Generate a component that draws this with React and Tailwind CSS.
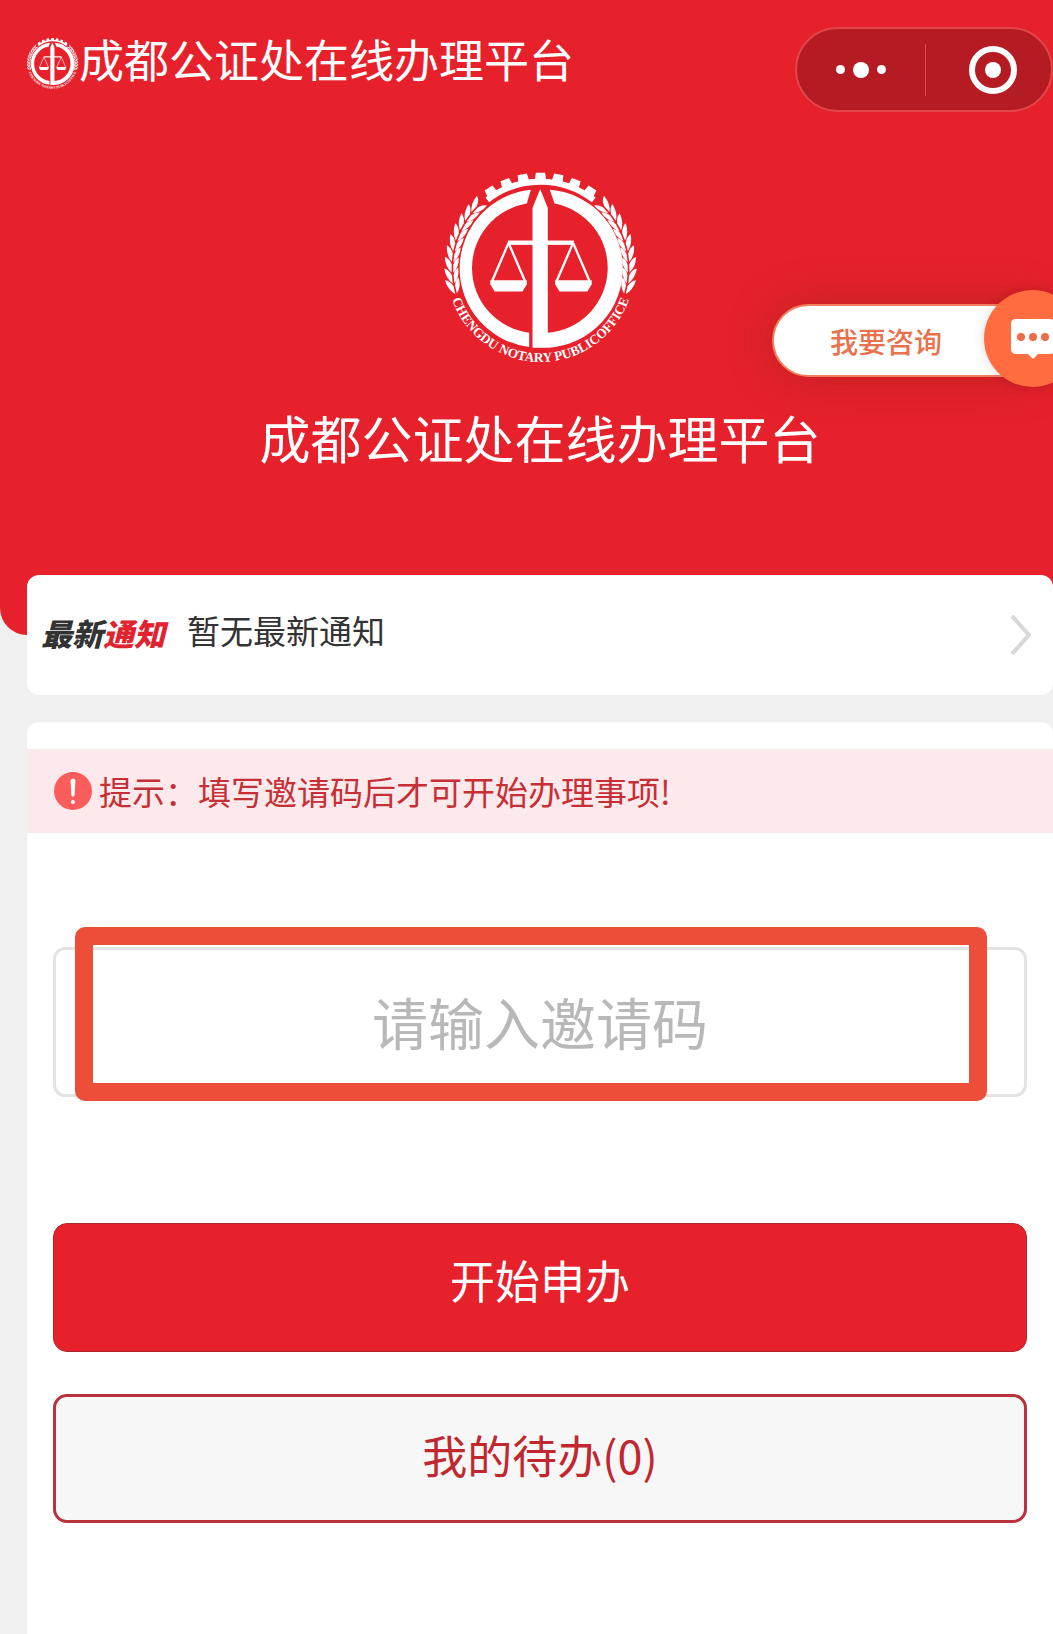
import React, { useId, useState } from "react";

const TEETH = [-33, -22, -11, 0, 11, 22, 33];
const LEAVES = [0, 1, 2, 3, 4, 5, 6, 7, 8];

const Wheat = () => (
  <g>
    {LEAVES.map((i) => (
      <g key={i} transform={`rotate(${-47 - i * 7} 334 326)`}>
        <path d="M316 59 L340 59 Q358 52 363 38 Q332 40 316 59 Z" />
        <path d="M316 64 L340 64 Q356 68 362 80 Q334 82 316 64 Z" />
      </g>
    ))}
  </g>
);

const Emblem = ({ className }) => {
  const arcId = useId();

  return (
    <svg
      viewBox="50 38 568 572"
      className={className}
      fill="#fff"
      overflow="visible"
      aria-hidden="true"
    >
      {/* Gear */}
      <path
        d="M174 121 A260 260 0 0 1 494 121"
        fill="none"
        stroke="#fff"
        strokeWidth="18"
      />
      {TEETH.map((angle) => (
        <path
          key={angle}
          d="M320 39 H348 L351 64 H317 Z"
          transform={`rotate(${angle} 334 326)`}
        />
      ))}

      {/* Wheat on both sides */}
      <Wheat />
      <g transform="translate(668 0) scale(-1 1)">
        <Wheat />
      </g>

      {/* Ring and sword */}
      <path d="M305 90 A238 238 0 0 0 300 563 L300 520 A196 196 0 0 1 293 132 Z" />
      <path d="M362 90 A238 238 0 0 1 332 565 L310 565 L310 145 L333 88 L356 145 L356 520 A196 196 0 0 0 376 132 Z" />

      {/* Scales */}
      <rect x="236" y="243" width="198" height="13" />
      <path
        d="M238 250 L189 364 M238 250 L287 364 M432 250 L383 364 M432 250 L481 364"
        fill="none"
        stroke="#fff"
        strokeWidth="7"
      />
      <path d="M183 362 H293 V374 L280 396 H196 L183 374 Z" />
      <path d="M378 362 H488 V374 L475 396 H391 L378 374 Z" />

      <path id={arcId} d="M52 326 A282 282 0 0 0 616 326" fill="none" />
      <text
        fontFamily="'Liberation Serif', serif"
        fontWeight="700"
        fontSize="40"
        textAnchor="middle"
      >
        <textPath href={`#${arcId}`} startOffset="50%">
          CHENGDU NOTARY PUBLICOFFICE
        </textPath>
      </text>
    </svg>
  );
};

const Capsule = () => (
  <div className="flex h-[85px] w-[258px] items-center rounded-full border-2 border-[#e4454b] bg-[#b51b22]">
    <button
      type="button"
      aria-label="更多"
      className="flex h-full w-[128px] items-center justify-center gap-2"
    >
      <span className="size-[9px] rounded-full bg-white" />
      <span className="size-4 rounded-full bg-white" />
      <span className="size-[9px] rounded-full bg-white" />
    </button>
    <span className="h-[52px] w-px bg-[#dc4a50]" />
    <button
      type="button"
      aria-label="关闭"
      className="flex h-full flex-1 items-center justify-center pl-2"
    >
      <span className="flex size-12 items-center justify-center rounded-full border-6 border-white">
        <span className="size-4 rounded-full bg-white" />
      </span>
    </button>
  </div>
);

const ConsultButton = () => (
  <button
    type="button"
    className="absolute top-[290px] -right-7 flex items-center"
  >
    <span className="mt-1 flex h-[73px] w-[262px] items-center rounded-l-full border-2 border-[#f0805f] bg-white pl-14 text-[28px] font-medium text-[#e8714e] shadow-[0_0_44px_rgba(120,40,20,0.35)]">
      我要咨询
    </span>
    <span className="-ml-[50px] flex size-[97px] items-center justify-center rounded-full bg-[#ff6c40] shadow-[0_0_12px_rgba(0,0,0,0.15)]">
      <svg viewBox="0 0 46 42" className="h-[42px] w-[46px]" aria-hidden="true">
        <path
          d="M6 1 H40 Q45 1 45 6 V31 Q45 36 40 36 H28 L23 41 L18 36 H6 Q1 36 1 31 V6 Q1 1 6 1 Z"
          fill="#fff"
        />
        <circle cx="11" cy="19" r="4" fill="#ef6a47" />
        <circle cx="23" cy="19" r="4" fill="#ef6a47" />
        <circle cx="35" cy="19" r="4" fill="#ef6a47" />
      </svg>
    </span>
  </button>
);

const App = () => {
  const [code, setCode] = useState("");

  return (
    <div className="relative flex min-h-screen flex-col overflow-hidden bg-[#f0f0f0] font-['Noto_Sans_CJK_SC',sans-serif]">
      <header className="rounded-b-[27px] bg-[#e6212b] pt-[27px] pb-[160px] pl-[27px] text-white">
        <div className="flex items-start justify-between">
          <div className="flex items-start">
            <Emblem className="mt-[11px] size-[51px]" />
            <span className="ml-px text-[45px] leading-[64px]">
              成都公证处在线办理平台
            </span>
          </div>
          <Capsule />
        </div>

        <Emblem className="mx-auto mt-[60px] h-[191px] w-[189px]" />
        <h1 className="mt-9 text-center text-[51px] leading-[76px]">
          成都公证处在线办理平台
        </h1>
      </header>

      <ConsultButton />

      <main className="-mt-[60px] flex flex-1 flex-col gap-[27px] pl-[27px]">
        {/* Notice */}
        <a
          href="#notice"
          className="flex h-[120px] items-center rounded-xl bg-white pr-[22px] pl-[14px]"
        >
          <span className="pb-1 text-[31px] font-black text-[#333] italic">
            最新<span className="text-[#e0232e]">通知</span>
          </span>
          <span className="ml-[22px] flex-1 pb-2 text-[33px] text-[#333]">
            暂无最新通知
          </span>
          <svg
            viewBox="0 0 20 40"
            className="h-10 w-5"
            fill="none"
            stroke="#d8d8d8"
            strokeWidth="4"
            aria-hidden="true"
          >
            <path d="M1 1 L18 20 L1 39" />
          </svg>
        </a>

        {/* Invitation code form */}
        <section className="flex-1 rounded-t-xl bg-white pt-[27px]">
          <p className="flex h-[84px] items-center gap-1.5 bg-[#fce9eb] pl-[26px] text-[33px] text-[#c62f36]">
            <svg viewBox="0 0 40 40" className="size-10" aria-hidden="true">
              <circle cx="20" cy="20" r="19" fill="#fb5c5c" />
              <path
                d="M18 9 Q20 7 22 9 L21 25 H19 Z"
                fill="#fff"
                stroke="#fff"
                strokeLinejoin="round"
              />
              <circle cx="20" cy="31" r="2" fill="#fff" />
            </svg>
            <span className="pt-0.5">提示：填写邀请码后才可开始办理事项!</span>
          </p>

          <form
            className="pt-[114px] pr-[26px] pb-[110px] pl-[26px]"
            onSubmit={(e) => e.preventDefault()}
          >
            <div className="relative">
              <input
                id="invite-code"
                type="text"
                aria-label="邀请码"
                value={code}
                onChange={(e) => setCode(e.target.value)}
                placeholder="请输入邀请码"
                className="block h-[150px] w-full rounded-xl border-3 border-[#e3e3e3] bg-white pb-1 text-center text-[56px] text-[#333] placeholder:text-[#b8b8b8]"
              />
              <div className="pointer-events-none absolute -top-5 right-10 -bottom-1 left-[22px] rounded-[10px] border-18 border-[#ec4e3a]" />
            </div>

            <button
              type="submit"
              className="mt-[126px] block h-[129px] w-full rounded-[14px] border border-[#b0262f] bg-[#e6212b] pb-4 text-[45px] text-white"
            >
              开始申办
            </button>
            <button
              type="button"
              className="mt-[42px] block h-[129px] w-full rounded-[14px] border-3 border-[#b8323e] bg-[#f7f7f7] pb-2 text-[45px] text-[#c0272f]"
            >
              我的待办(0)
            </button>
          </form>
        </section>
      </main>
    </div>
  );
};

export default App;
